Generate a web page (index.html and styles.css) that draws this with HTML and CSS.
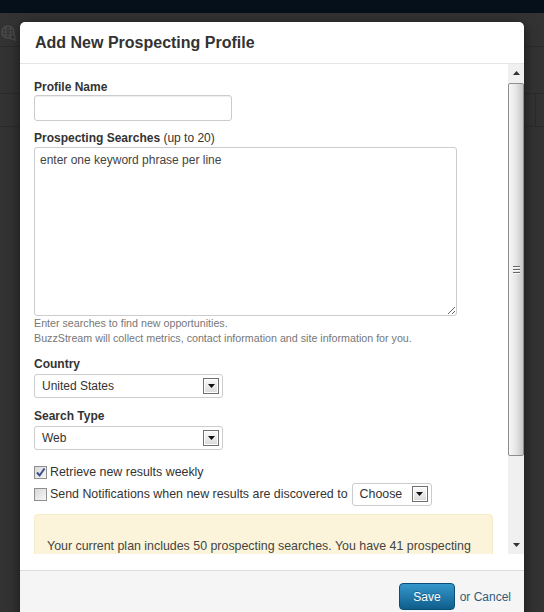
FILE: index.html
```html
<!DOCTYPE html>
<html lang="en">
<head>
<meta charset="UTF-8" />
<title>Add New Prospecting Profile</title>
<link rel="stylesheet" href="styles.css">
</head>
<body>

<div class="topbar"></div>
<div class="page-head">
  <svg class="globe" width="16" height="17" viewBox="0 0 16 17">
    <circle cx="7" cy="7" r="6" fill="none" stroke="#4a4a4a" stroke-width="1.6"/>
    <ellipse cx="7" cy="7" rx="2.6" ry="6" fill="none" stroke="#4a4a4a" stroke-width="1.2"/>
    <path d="M1 7h12M2 4h10M2 10h10" stroke="#4a4a4a" stroke-width="1.1"/>
    <circle cx="11.5" cy="12" r="2.4" fill="#333" stroke="#4a4a4a" stroke-width="1.3"/>
    <path d="M13.2 13.8l2 2" stroke="#4a4a4a" stroke-width="1.6"/>
  </svg>
</div>
<div class="page-toolbar"></div>
<div class="page-subbar"><span class="divider"></span></div>

<div class="modal">
  <div class="modal-header">
    <h3>Add New Prospecting Profile</h3>
  </div>

  <div class="modal-body">
    <div class="scroll-wrap">
      <div class="scroll-content">
        <label class="field-label">Profile Name</label>
        <input class="text-input" type="text" />

        <label class="field-label">Prospecting Searches <span class="hint">(up to 20)</span></label>
        <textarea class="searches" placeholder="enter one keyword phrase per line"></textarea>
        <div class="help">
          Enter searches to find new opportunities.<br>
          BuzzStream will collect metrics, contact information and site information for you.
        </div>

        <label class="field-label section">Country</label>
        <div class="select wide">
          <span>United States</span>
          <span class="arrow"><svg width="7" height="4"><path d="M0 0h7L3.5 4z" fill="#111"/></svg></span>
        </div>

        <label class="field-label section">Search Type</label>
        <div class="select wide">
          <span>Web</span>
          <span class="arrow"><svg width="7" height="4"><path d="M0 0h7L3.5 4z" fill="#111"/></svg></span>
        </div>

        <div class="check-row first">
          <span class="check">
            <svg width="11" height="11"><path d="M2 5.5l2.6 3L9.5 1.5" fill="none" stroke="#3b4d8e" stroke-width="2"/></svg>
          </span>
          <span>Retrieve new results weekly</span>
        </div>
        <div class="check-row">
          <span class="check"></span>
          <span>Send Notifications when new results are discovered to</span>
          <div class="select small">
            <span>Choose</span>
            <span class="arrow"><svg width="7" height="4"><path d="M0 0h7L3.5 4z" fill="#111"/></svg></span>
          </div>
        </div>

        <div class="notice">
          Your current plan includes 50 prospecting searches. You have 41 prospecting
        </div>
      </div>

      <div class="scrollbar">
        <div class="sb-btn"><svg width="7" height="4"><path d="M3.5 0L7 4H0z" fill="#333"/></svg></div>
        <div class="sb-track">
          <div class="sb-thumb"><span class="grip"></span></div>
        </div>
        <div class="sb-btn"><svg width="7" height="4"><path d="M0 0h7L3.5 4z" fill="#333"/></svg></div>
      </div>
    </div>
  </div>

  <div class="modal-footer">
    <button class="btn-save">Save</button>
    <span class="cancel">or Cancel</span>
  </div>
</div>

</body>
</html>
```

FILE: styles.css
```css
body {
  margin: 0;
  height: 612px;
  overflow: hidden;
  background-color: #333;
  font-family: "Liberation Sans", Arial, sans-serif;
  color: #333;
}

/* page behind the dialog */
.topbar {
  height: 13px;
  background: #06101a;
}
.page-head {
  height: 34px;
  border-bottom: 1px solid #2b2b2b;
  box-sizing: border-box;
  padding: 12px 0 0 1px;
}
.page-toolbar {
  height: 46px;
  border-bottom: 1px solid #2b2b2b;
}
.page-subbar {
  height: 32px;
  border-bottom: 1px solid #2b2b2b;
  position: relative;
}
.page-subbar .divider {
  position: absolute;
  left: 535px;
  top: 0;
  width: 1px;
  height: 32px;
  background: #2a2a2a;
}

/* dialog */
.modal {
  position: absolute;
  left: 20px;
  top: 22px;
  width: 504px;
  background: #fff;
  border-radius: 5px 5px 0 0;
  box-shadow: 0 3px 14px rgba(0,0,0,0.55);
}
.modal-header {
  height: 42px;
  box-sizing: border-box;
  padding: 0 15px;
  border-bottom: 1px solid #e5e5e5;
  display: flex;
  align-items: center;
}
.modal-header h3 {
  margin: 0;
  font-size: 16px;
  font-weight: bold;
  color: #333;
}
.modal-body {
  padding-bottom: 16px;
}
.scroll-wrap {
  display: flex;
  height: 490px;
}
.scroll-content {
  flex: 1;
  overflow: hidden;
  padding: 15px 15px 0 14px;
}

/* classic scrollbar */
.scrollbar {
  width: 16px;
  display: flex;
  flex-direction: column;
  background: #f0f0f0;
}
.sb-btn {
  height: 18px;
  display: flex;
  align-items: center;
  justify-content: center;
}
.sb-track {
  flex: 1;
  padding-top: 1px;
}
.sb-thumb {
  height: 373px;
  box-sizing: border-box;
  border: 1px solid #8e8e8e;
  border-radius: 2px;
  background: linear-gradient(to right, #f6f6f6, #e8e8e8 45%, #c6c6c6);
  display: flex;
  align-items: center;
  justify-content: center;
}
.grip {
  width: 7px;
  height: 8px;
  background: linear-gradient(to bottom, #666 0 1px, #fafafa 1px 2px, transparent 2px 3px, #666 3px 4px, #fafafa 4px 5px, transparent 5px 6px, #666 6px 7px, #fafafa 7px 8px);
}

/* form */
.field-label {
  display: block;
  font-size: 12px;
  font-weight: bold;
  line-height: 16px;
}
.field-label .hint {
  font-weight: normal;
}
.field-label.section {
  margin-top: 10px;
  margin-bottom: 2px;
}
.text-input {
  display: block;
  width: 198px;
  height: 26px;
  box-sizing: border-box;
  margin: 0 0 9px;
  border: 1px solid #ccc;
  border-radius: 3px;
  box-shadow: inset 0 1px 1px rgba(0,0,0,0.07);
}
.searches {
  display: block;
  width: 423px;
  height: 169px;
  box-sizing: border-box;
  margin: 1px 0 0;
  padding: 4px 5px;
  border: 1px solid #ccc;
  border-radius: 3px;
  font-family: inherit;
  font-size: 12px;
  line-height: 16px;
}
.searches::placeholder {
  color: #444;
}
.help {
  font-size: 10.7px;
  line-height: 15px;
  color: #777;
}
.select {
  display: flex;
  align-items: center;
  justify-content: space-between;
  box-sizing: border-box;
  border: 1px solid #ccc;
  border-radius: 3px;
  background: #fff;
  font-size: 12px;
  color: #333;
  padding: 0 3px 0 7px;
}
.select.wide {
  width: 189px;
  height: 24px;
}
.select.small {
  width: 80px;
  height: 23px;
  margin-left: 4px;
  font-size: 12.4px;
}
.select .arrow {
  width: 16px;
  height: 16px;
  box-sizing: border-box;
  border: 1px solid #6f6f6f;
  background: linear-gradient(#fafafa, #dadada);
  box-shadow: inset 0 0 0 1px #fff;
  display: flex;
  align-items: center;
  justify-content: center;
}
.check-row {
  display: flex;
  align-items: center;
  height: 22px;
  font-size: 12.4px;
}
.check-row.first {
  margin-top: 11px;
}
.check {
  width: 13px;
  height: 13px;
  box-sizing: border-box;
  border: 1px solid #8f8f8f;
  background: linear-gradient(135deg, #d8d8d8, #f7f7f7);
  margin-right: 3px;
  display: flex;
  align-items: center;
  justify-content: center;
}
.notice {
  margin-top: 9px;
  padding: 23px 12px 24px;
  background: #fcf4da;
  border: 1px solid #f7ecc9;
  border-radius: 4px;
  font-size: 12.4px;
  line-height: 16px;
  color: #444;
}

/* footer */
.modal-footer {
  border-top: 1px solid #ddd;
  background: #f5f5f5;
  padding: 12px 13px 14px;
  display: flex;
  justify-content: flex-end;
  align-items: center;
  gap: 5px;
}
.btn-save {
  height: 27px;
  padding: 0 13px;
  border: 1px solid #0b4f78;
  border-radius: 4px;
  background: linear-gradient(#3597cc, #0f5e8c);
  color: #fff;
  font-family: inherit;
  font-size: 12px;
  text-shadow: 0 -1px 0 rgba(0,0,0,0.25);
}
.cancel {
  font-size: 12px;
  color: #345a78;
}
```
